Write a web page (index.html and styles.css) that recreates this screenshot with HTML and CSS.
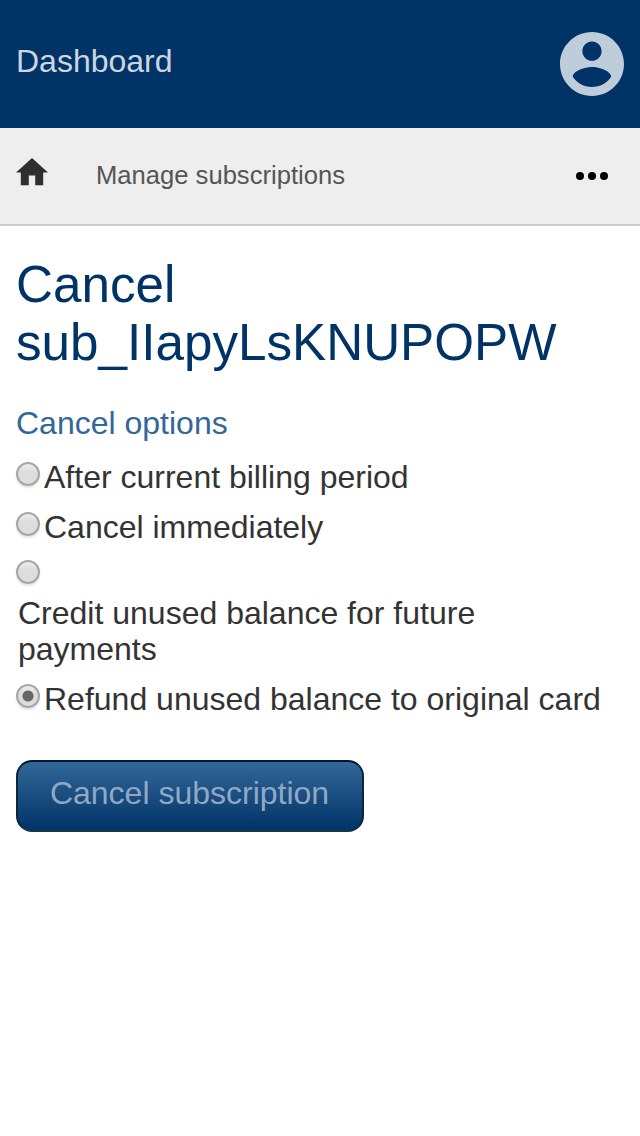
FILE: index.html
```html
<!DOCTYPE html>
<html lang="en">
<head>
<meta charset="utf-8">
<title>Cancel subscription</title>
<link rel="stylesheet" href="styles.css">
</head>
<body>
<header class="header">
  <a class="brand">Dashboard</a>
  <svg class="account" viewBox="2 2 20 20"><path d="M12 2C6.48 2 2 6.48 2 12s4.480 10 10 10 10-4.480 10-10S17.520 2 12 2zm0 3c1.660 0 3 1.340 3 3s-1.340 3-3 3-3-1.340-3-3 1.340-3 3-3zm0 14.200c-2.500 0-4.710-1.280-6-3.220.030-1.990 4-3.080 6-3.080 1.990 0 5.970 1.090 6 3.080-1.290 1.940-3.500 3.220-6 3.220z"/></svg>
</header>
<nav class="nav">
  <svg class="home" viewBox="2 3 20 17"><path d="M10 20v-6h4v6h5v-8h3L12 3 2 12h3v8z"/></svg>
  <a class="crumb">Manage subscriptions</a>
  <svg class="more" viewBox="0 0 32 8"><circle cx="4" cy="4" r="4"/><circle cx="16" cy="4" r="4"/><circle cx="28" cy="4" r="4"/></svg>
</nav>
<main class="content">
  <h1 class="title">Cancel sub_IIapyLsKNUPOPW</h1>
  <h2 class="legend">Cancel options</h2>
  <form class="form">
    <label class="option"><span class="radio"></span><span class="text">After current billing period</span></label>
    <label class="option"><span class="radio"></span><span class="text">Cancel immediately</span></label>
    <label class="option wrapped"><span class="radio"></span><span class="text">Credit unused balance for future payments</span></label>
    <label class="option"><span class="radio checked"></span><span class="text">Refund unused balance to original card</span></label>
    <button class="submit" type="button">Cancel subscription</button>
  </form>
</main>
</body>
</html>
```
FILE: styles.css
```css
* { box-sizing: border-box; }
body {
  margin: 0;
  background: #fff;
  color: #333;
  font: 32px/36px "Liberation Sans", Arial, sans-serif;
}
.header {
  display: flex;
  justify-content: space-between;
  height: 128px;
  padding: 32px 16px;
  background: #036;
}
.brand { padding-top: 11px; color: #ccd6e0; }
.account { width: 64px; height: 64px; fill: #bfccd9; }
.nav {
  display: flex;
  height: 98px;
  padding: 0 32px 0 16px;
  background: #eee;
  border-bottom: 2px solid #ccc;
}
.home { width: 32px; height: 27.200px; margin-top: 30.400px; fill: #2e2e2e; }
.crumb { margin: 29px auto 0 48px; font-size: 25.6px; line-height: 36px; color: #555; }
.more { width: 32px; height: 8px; margin-top: 44px; }
.content { padding: 30px 16px; }
.title { margin: 0; font-size: 51.2px; line-height: 58px; font-weight: 400; color: #036; }
.legend { margin: 33px 0 18px; font-size: 32px; line-height: 36px; font-weight: 400; color: #369; }
.form { display: flex; flex-direction: column; align-items: flex-start; }
.option { display: flex; gap: 4px; margin-bottom: 14px; }
.wrapped { flex-direction: column; gap: 11px; }
.wrapped .text { max-width: 500px; padding-left: 2px; }
.wrapped .radio { margin-top: 1px; }
.radio {
  width: 24px;
  height: 24px;
  margin-top: 3px;
  border: 2px solid #a6a6a6;
  border-radius: 50%;
  background: linear-gradient(#eee, #ddd 40%);
  box-shadow: 0 2px 2px #e4e4e4;
}
.checked { background: radial-gradient(circle, #666 5px, transparent 6px), linear-gradient(#eee, #ddd 40%); }
.submit {
  width: 348px;
  height: 72px;
  margin-top: 29px;
  padding: 0 1px 6px 0;
  border: 2px solid;
  border-color: #001a33 #0d2640 #1a334d;
  border-radius: 16px;
  background: linear-gradient(#369, #036);
  color: #8fa9c4;
  font: inherit;
}
```
